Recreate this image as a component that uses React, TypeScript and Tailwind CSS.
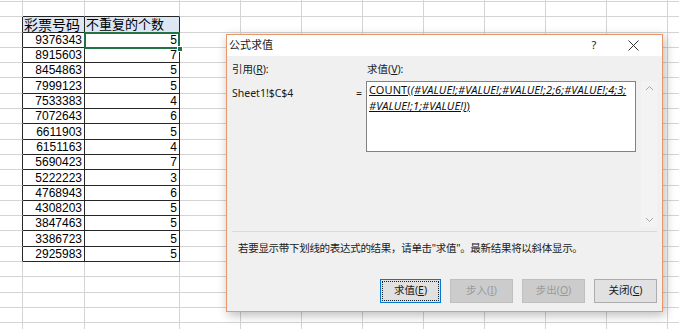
const data: [string, string][] = [
  ['9376343', '5'],
  ['8915603', '7'],
  ['8454863', '5'],
  ['7999123', '5'],
  ['7533383', '4'],
  ['7072643', '6'],
  ['6611903', '5'],
  ['6151163', '4'],
  ['5690423', '7'],
  ['5222223', '3'],
  ['4768943', '6'],
  ['4308203', '5'],
  ['3847463', '5'],
  ['3386723', '5'],
  ['2925983', '5'],
];

const grid = 'border-[#d4d4d4]';

function RestCells() {
  return (
    <>
      {Array.from({ length: 9 }).map((_, i) => (
        <div key={i} className={`w-[61px] shrink-0 border-r border-b ${grid}`} />
      ))}
    </>
  );
}

function EmptyRow({ h = 'h-[15.3px]', tableTop = false }: { h?: string; tableTop?: boolean }) {
  return (
    <div className={`flex ${h}`}>
      <div className={`w-[23px] shrink-0 border-r border-b ${grid}`} />
      <div className={`w-[62px] shrink-0 border-r border-b ${grid} ${tableTop ? 'border-b-[#262626]' : ''}`} />
      <div className={`w-[95px] shrink-0 border-r border-b ${grid} ${tableTop ? 'border-b-[#262626]' : ''}`} />
      <RestCells />
    </div>
  );
}

function TableRow({ b, c, header = false, selected = false }: { b: string; c: string; header?: boolean; selected?: boolean }) {
  return (
    <div className="flex h-[15.3px]">
      <div className="w-[23px] shrink-0 border-r border-b border-r-[#262626] border-b-[#d4d4d4]" />
      <div
        className={`w-[62px] shrink-0 border-r border-b border-[#262626] flex items-end whitespace-nowrap ${
          header ? 'bg-[#dde7f3] justify-start pl-[1px] text-[14px] leading-[14px]' : 'justify-end pr-[2px] text-[12px] leading-[13px]'
        }`}
      >
        {b}
      </div>
      <div
        className={`relative w-[95px] shrink-0 border-r border-b border-[#262626] flex items-end whitespace-nowrap ${
          header ? 'bg-[#dde7f3] justify-start pl-[1px] text-[13px] leading-[14px]' : 'justify-end pr-[2px] text-[12px] leading-[13px]'
        }`}
      >
        {c}
        {selected && (
          <>
            <div className="absolute z-10 left-[-1px] top-[-1px] right-[-1px] bottom-[-2px] border-2 border-[#217346]" />
            <div className="absolute z-10 right-[-4px] bottom-[-5px] w-[6px] h-[6px] bg-[#217346] border border-white" />
          </>
        )}
      </div>
      <RestCells />
    </div>
  );
}

function U({ children }: { children: string }) {
  return <span className="underline underline-offset-[1px]">{children}</span>;
}

function Chevron({ up }: { up?: boolean }) {
  return (
    <svg width="9" height="6" viewBox="0 0 9 6" className="block">
      <path d={up ? 'M1 5 L4.5 1.5 L8 5' : 'M1 1 L4.5 4.5 L8 1'} fill="none" stroke="#a6a6a6" strokeWidth="1" />
    </svg>
  );
}

function Dialog() {
  return (
    <div className="absolute left-[226px] top-[34px] w-[437px] h-[278px] border border-[#e8966c] bg-[#f0f0f0] shadow-[2px_3px_10px_rgba(0,0,0,0.28)] flex flex-col font-['Noto_Sans','Noto_Sans_CJK_SC',sans-serif] text-[10.5px] text-[#1a1a1a]">
      <div className="h-[21px] bg-white flex items-center shrink-0">
        <div className="pl-[2px] text-[11px] flex-1">公式求值</div>
        <div className="w-[20px] text-center text-[11px] text-[#222]">?</div>
        <div className="w-[58px] flex justify-center pl-[1px]">
          <svg width="11" height="11" viewBox="0 0 11 11">
            <path d="M0.5 0.5 L10.5 10.5 M10.5 0.5 L0.5 10.5" stroke="#333" strokeWidth="1" />
          </svg>
        </div>
      </div>

      <div className="flex-1 flex flex-col pl-[5px] pr-[5px]">
        <div className="flex mt-[7px]">
          <div className="w-[134px] shrink-0 flex flex-col">
            <div className="h-[13px] leading-[13px]">
              引用(<U>R</U>):
            </div>
            <div className="flex mt-[11px] h-[13px] leading-[13px]">
              <div className="w-[124px] shrink-0">Sheet1!$C$4</div>
              <div>=</div>
            </div>
          </div>
          <div className="flex-1 flex flex-col">
            <div className="h-[13px] leading-[13px] pl-[1px]">
              求值(<U>V</U>):
            </div>
            <div className="flex mt-[5px] h-[146px]">
              <div className="w-[270px] h-[71px] shrink-0 bg-white border border-[#828282] px-[2px] leading-[16px] text-[11px] text-[#111] tracking-[0.1px]">
                <U>COUNT(</U>
                <span className="italic underline underline-offset-[1px]">(#VALUE!;#VALUE!;#VALUE!;2;6;#VALUE!;4;3;</span>
                <br />
                <span className="italic underline underline-offset-[1px]">#VALUE!;1;#VALUE!)</span>
                <U>)</U>
              </div>
              <div className="ml-[5px] w-[16px] bg-[#f3f3f3] flex flex-col items-center justify-between py-[4px]">
                <Chevron up />
                <Chevron />
              </div>
            </div>
          </div>
        </div>

        <div className="mt-[4px] h-px bg-[#dadada]" />

        <div className="mt-[9px] pl-[6px] h-[14px] leading-[14px] tracking-[-0.3px] whitespace-nowrap">
          若要显示带下划线的表达式的结果，请单击"求值"。最新结果将以斜体显示。
        </div>

        <div className="mt-[24px] flex justify-end gap-[9px]">
          <div className="w-[61px] h-[24px] border border-[#0078d7] bg-[#e1e1e1] p-[1px]">
            <div className="h-full border border-dotted border-[#222] flex items-center justify-center">
              求值(<U>E</U>)
            </div>
          </div>
          <div className="w-[63px] h-[24px] border border-[#bfbfbf] bg-[#cccccc] flex items-center justify-center text-[#9a9a9a]">
            步入(<U>I</U>)
          </div>
          <div className="w-[63px] h-[24px] border border-[#bfbfbf] bg-[#cccccc] flex items-center justify-center text-[#9a9a9a]">
            步出(<U>O</U>)
          </div>
          <div className="w-[63px] h-[24px] border border-[#adadad] bg-[#e1e1e1] flex items-center justify-center">
            关闭(<U>C</U>)
          </div>
        </div>
      </div>
    </div>
  );
}

export default function App() {
  return (
    <div className="relative w-[679px] h-[329px] overflow-hidden bg-white">
      <div className="flex flex-col font-['Liberation_Sans','Noto_Sans_CJK_SC',sans-serif] text-black">
        <EmptyRow h="h-[2px]" />
        <EmptyRow tableTop />
        <TableRow header b="彩票号码" c="不重复的个数" />
        {data.map(([b, c], i) => (
          <TableRow key={b} b={b} c={c} selected={i === 0} />
        ))}
        <EmptyRow />
        <EmptyRow />
        <EmptyRow />
        <EmptyRow />
        <EmptyRow />
      </div>
      <Dialog />
    </div>
  );
}
